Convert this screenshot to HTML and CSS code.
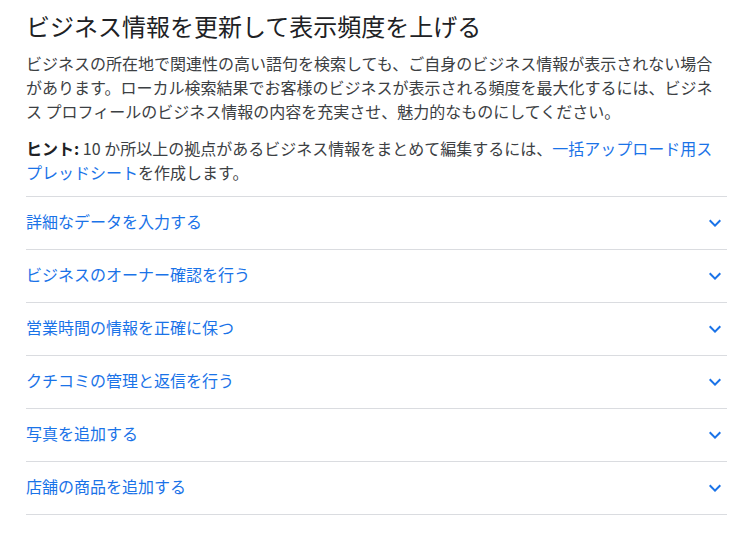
FILE: index.html
```html
<!DOCTYPE html>
<html lang="ja">
<head>
    <meta charset="UTF-8">
    <title>ビジネス情報を更新して表示頻度を上げる</title>
    <link rel="stylesheet" href="styles.css">
</head>
<body>
    <div class="section">
        <h2 class="title">ビジネス情報を更新して表示頻度を上げる</h2>
        <p class="lead">ビジネスの所在地で関連性の高い語句を検索しても、ご自身のビジネス情報が表示されない場合があります。ローカル検索結果でお客様のビジネスが表示される頻度を最大化するには、ビジネス プロフィールのビジネス情報の内容を充実させ、魅力的なものにしてください。</p>
        <p class="hint"><b>ヒント:</b> 10 か所以上の拠点があるビジネス情報をまとめて編集するには、<a href="#">一括アップロード用スプレッドシート</a>を作成します。</p>

        <div class="accordion">
            <div class="item">
                <span>詳細なデータを入力する</span>
                <svg viewBox="0 0 24 24"><path d="M16.59 8.59L12 13.17 7.41 8.59 6 10l6 6 6-6z"/></svg>
            </div>
            <div class="item">
                <span>ビジネスのオーナー確認を行う</span>
                <svg viewBox="0 0 24 24"><path d="M16.59 8.59L12 13.17 7.41 8.59 6 10l6 6 6-6z"/></svg>
            </div>
            <div class="item">
                <span>営業時間の情報を正確に保つ</span>
                <svg viewBox="0 0 24 24"><path d="M16.59 8.59L12 13.17 7.41 8.59 6 10l6 6 6-6z"/></svg>
            </div>
            <div class="item">
                <span>クチコミの管理と返信を行う</span>
                <svg viewBox="0 0 24 24"><path d="M16.59 8.59L12 13.17 7.41 8.59 6 10l6 6 6-6z"/></svg>
            </div>
            <div class="item">
                <span>写真を追加する</span>
                <svg viewBox="0 0 24 24"><path d="M16.59 8.59L12 13.17 7.41 8.59 6 10l6 6 6-6z"/></svg>
            </div>
            <div class="item">
                <span>店舗の商品を追加する</span>
                <svg viewBox="0 0 24 24"><path d="M16.59 8.59L12 13.17 7.41 8.59 6 10l6 6 6-6z"/></svg>
            </div>
        </div>
    </div>
</body>
</html>
```

FILE: styles.css
```css
body {
    margin: 0;
    background: #fff;
    font-family: 'Noto Sans CJK JP', 'Noto Sans', sans-serif;
    color: #3c4043;
}

.section {
    width: 701px;
    padding: 10px 0 0 26px;
}

.title {
    margin: 0 0 9px;
    font-size: 24px;
    line-height: 32px;
    font-weight: 400;
    color: #202124;
}

.lead,
.hint {
    margin: 0;
    font-size: 16px;
    line-height: 24px;
}

.hint {
    margin-top: 13px;
}

.hint b {
    font-weight: 700;
    color: #202124;
}

.hint a {
    color: #1a73e8;
    text-decoration: none;
}

.accordion {
    margin-top: 12px;
    border-bottom: 1px solid #dadce0;
}

.item {
    display: flex;
    align-items: center;
    justify-content: space-between;
    height: 52px;
    border-top: 1px solid #dadce0;
    font-size: 16px;
    line-height: 24px;
    color: #1a73e8;
    cursor: pointer;
}

.item span {
    margin-bottom: 4px;
}

.item svg {
    width: 24px;
    height: 24px;
    fill: #1a73e8;
}
```
